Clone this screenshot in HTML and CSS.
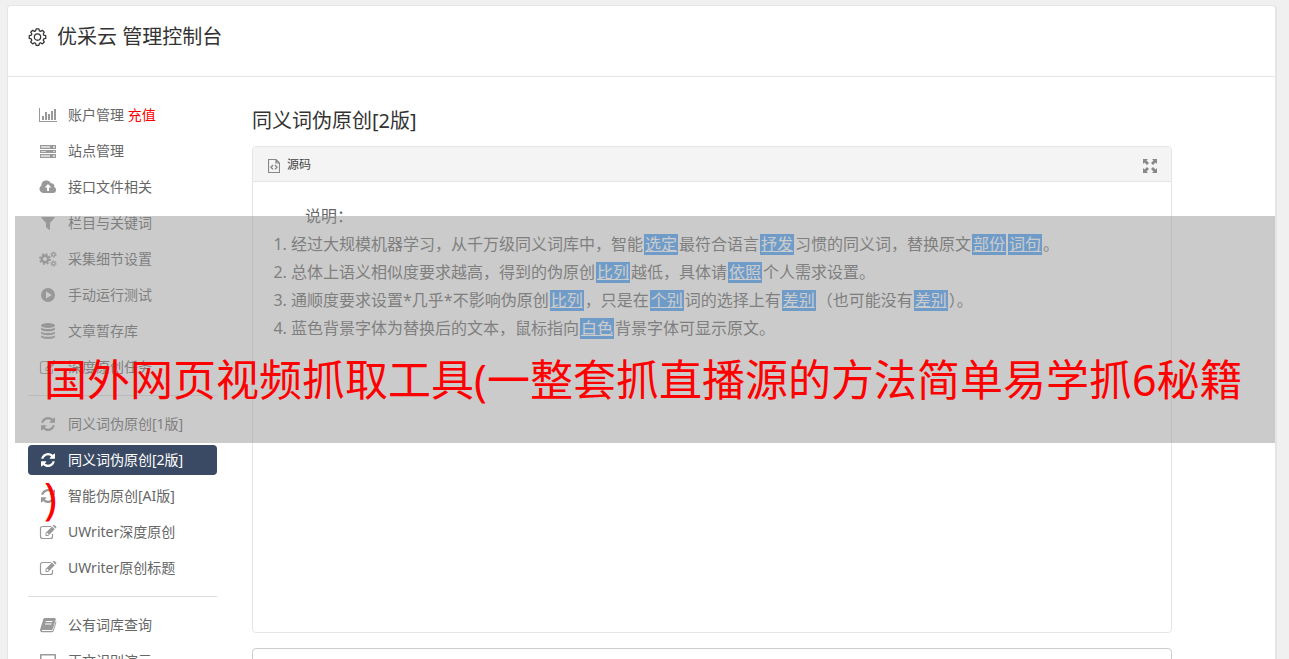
FILE: index.html
```html
<!DOCTYPE html>
<html lang="zh-CN">
<head>
    <meta charset="UTF-8">
    <meta name="viewport" content="width=device-width, initial-scale=1.0">
    <title>优采云 管理控制台</title>
    <link rel="stylesheet" href="styles.css">
</head>
<body>
    <!-- icon set -->
    <svg class="sprite" aria-hidden="true">
        <symbol id="i-chart" viewBox="0 0 18 16">
            <path d="M0 1h1v13h17v1H0zM3 9h2v4H3zM6 5h2v8H6zM9 7h2v6H9zM12 4h2v9h-2zM15 2h2v11h-2z"/>
        </symbol>
        <symbol id="i-server" viewBox="0 0 18 16">
            <path opacity=".4" d="M1 2h16v4H1zM1 7h16v3H1zM1 11h16v4H1z"/>
            <path fill-rule="evenodd" d="M1 2h16v4H1zM2 3v2h9V3zM14 3v2h2V3zM1 7h16v3H1zM2 8v1h5V8zM14 8v1h2V8zM1 11h16v4H1zM2 12v2h9v-2zM14 12v2h2v-2z"/>
        </symbol>
        <symbol id="i-cloud" viewBox="0 0 18 16">
            <path fill-rule="evenodd" d="M4 14a4 4 0 0 1-1.600-7.400A5 5 0 0 1 12 4.500a2.500 2.500 0 0 1 3 3.500A3.100 3.100 0 0 1 14.500 14zM8 12h2V8.500h2.300L9 5 5.700 8.500H8z"/>
        </symbol>
        <symbol id="i-filter" viewBox="0 0 18 16">
            <path d="M3 2h12c.7 0 .8.700.4 1.100L11 8v6.500c0 .5-.5.600-.8.300L7.300 12.600 7 12V8L2.600 3.100C2.200 2.700 2.300 2 3 2z"/>
        </symbol>
        <symbol id="i-cogs" viewBox="0 0 18 16">
            <g fill="none" stroke="currentColor">
                <circle cx="6" cy="8" r="3.200" stroke-width="2.400"/>
                <circle cx="6" cy="8" r="5" stroke-width="1.800" stroke-dasharray="2 1.927"/>
                <circle cx="14.500" cy="3.500" r="1.700" stroke-width="1.300"/>
                <circle cx="14.500" cy="3.500" r="2.700" stroke-dasharray="1.300 1.527"/>
                <circle cx="14.500" cy="12.500" r="1.700" stroke-width="1.300"/>
                <circle cx="14.500" cy="12.500" r="2.700" stroke-dasharray="1.300 1.527"/>
            </g>
        </symbol>
        <symbol id="i-play" viewBox="0 0 18 16">
            <path fill-rule="evenodd" d="M9 1a7 7 0 1 0 0 14A7 7 0 1 0 9 1zM7 4.500v7L12.800 8z"/>
        </symbol>
        <symbol id="i-database" viewBox="0 0 18 16">
            <ellipse cx="9" cy="2.500" rx="7" ry="2.500"/>
            <path d="M2 4.500c2 2 12 2 14 0v2c-1 2.600-13 2.600-14 0zM2 8.500c2 2 12 2 14 0v1.800c-1 2.600-13 2.600-14 0zM2 12.200c2 2 12 2 14 0V14c-1 2.600-13 2.600-14 0z"/>
        </symbol>
        <symbol id="i-edit" viewBox="0 0 18 16">
            <path d="M12 2.500H3.500a2 2 0 0 0-2 2v8a2 2 0 0 0 2 2h8a2 2 0 0 0 2-2V10" fill="none" stroke="currentColor" stroke-width="1.200"/>
            <path fill-rule="evenodd" d="M6.500 9 13 2.500l2.700 2.700L9.200 12H6.500zM7.500 9.300v1.600h1.600l.6-.6-1.600-1.600zM13.700 1.800l.7-.6c.4-.4 1-.4 1.400 0l1.300 1.300c.4.400.4 1 0 1.400l-.7.600z"/>
        </symbol>
        <symbol id="i-refresh" viewBox="0 0 1536 1536">
            <path d="M1511 928q0 5-1 7-64 268-268 434.500t-478 166.500q-146 0-282.500-55t-243.500-157l-129 129q-19 19-45 19t-45-19-19-45v-448q0-26 19-45t45-19h448q26 0 45 19t19 45-19 45l-137 137q71 66 161 102t187 36q134 0 250-65t186-179q11-17 53-117 8-23 30-23h192q13 0 22.500 9.500t9.500 22.500zm25-800v448q0 26-19 45t-45 19h-448q-26 0-45-19t-19-45 19-45l138-138q-148-137-349-137-134 0-250 65t-186 179q-11 17-53 117-8 23-30 23h-199q-13 0-22.500-9.500t-9.500-22.500v-7q65-268 270-434.500t480-166.500q146 0 284 55.500t245 156.500l130-129q19-19 45-19t45 19 19 45z"/>
        </symbol>
        <symbol id="i-book" viewBox="0 0 18 16">
            <path fill-rule="evenodd" d="M6 1h9.500c1 0 1.500.6 1.200 1.500L13.800 12c-.2.700-.8 1-1.500 1H4c-1 0-1.300.500-.8 1h9.600c.7 0 1.100-.3 1.300-1l2.700-9c.6.500.7 1 .5 1.600l-2.500 8.200c-.3.900-1 1.400-1.900 1.400H3.200C1.500 15.200.7 13.600 1.200 12.200L4 3c.4-1.200.9-2 2-2zM7 4l-.3 1h6.500l.3-1zM6.200 6.500l-.3 1h6.500l.3-1z"/>
        </symbol>
        <symbol id="i-laptop" viewBox="0 0 18 16">
            <path fill-rule="evenodd" d="M2 1h14a1 1 0 0 1 1 1v10H1V2a1 1 0 0 1 1-1zM2.500 2.500v8h13v-8zM0 13h18v1.500H0z"/>
        </symbol>
    </svg>

    <div class="console">
        <header class="console-header">
            <svg class="gear" viewBox="0 0 18 18" fill="none" stroke="currentColor" stroke-width="1.200" stroke-linejoin="round" aria-hidden="true">
                <path d="M7.200 2.700 7.700.8h2.600l.5 1.900 1.100.5 1.700-1L15.400 4l-1 1.700.5 1.100 1.900.5v2.600l-1.900.5-.5 1.100 1 1.700-1.800 1.800-1.700-1-1.100.5-.5 1.900H7.700l-.5-1.900-1.100-.5-1.700 1L2.600 13.200l1-1.700-.5-1.100-1.900-.5V7.300l1.900-.5.5-1.100-1-1.700 1.800-1.800 1.700 1z"/>
                <circle cx="9" cy="8.600" r="3"/>
            </svg>
            <h1>优采云 管理控制台</h1>
        </header>

        <div class="console-body">
            <nav class="sidebar">
                <ul>
                    <li><a href="#"><svg><use href="#i-chart"/></svg><span>账户管理 <b class="recharge">充值</b></span></a></li>
                    <li><a href="#"><svg><use href="#i-server"/></svg>站点管理</a></li>
                    <li><a href="#"><svg><use href="#i-cloud"/></svg>接口文件相关</a></li>
                    <li><a href="#"><svg><use href="#i-filter"/></svg>栏目与关键词</a></li>
                    <li><a href="#"><svg><use href="#i-cogs"/></svg>采集细节设置</a></li>
                    <li><a href="#"><svg><use href="#i-play"/></svg>手动运行测试</a></li>
                    <li><a href="#"><svg><use href="#i-database"/></svg>文章暂存库</a></li>
                    <li><a href="#"><svg><use href="#i-edit"/></svg>深度原创任务</a></li>
                </ul>
                <ul>
                    <li><a href="#"><svg class="small"><use href="#i-refresh"/></svg>同义词伪原创[1版]</a></li>
                    <li><a href="#" class="active"><svg class="small"><use href="#i-refresh"/></svg>同义词伪原创[2版]</a></li>
                    <li><a href="#"><svg class="small"><use href="#i-refresh"/></svg>智能伪原创[AI版]</a></li>
                    <li><a href="#"><svg><use href="#i-edit"/></svg>UWriter深度原创</a></li>
                    <li><a href="#"><svg><use href="#i-edit"/></svg>UWriter原创标题</a></li>
                </ul>
                <ul>
                    <li><a href="#"><svg><use href="#i-book"/></svg>公有词库查询</a></li>
                    <li><a href="#"><svg><use href="#i-laptop"/></svg>正文识别演示</a></li>
                </ul>
            </nav>

            <main class="content">
                <h2>同义词伪原创[2版]</h2>
                <section class="editor">
                    <div class="toolbar">
                        <button type="button" class="source">
                            <svg viewBox="0 0 12 14" fill="none" stroke="currentColor" aria-hidden="true">
                                <path d="M.5.500h7.500L11.500 4v9.500H.5zM8 .5V4h3.500" stroke-width="1.200"/>
                                <path d="M5 6 3 8.200 5 10.400M7 6l2 2.200-2 2.200" stroke-width="1.400"/>
                            </svg>
                            源码
                        </button>
                        <button type="button" class="maximize" aria-label="最大化">
                            <svg viewBox="0 0 14 14" aria-hidden="true">
                                <path d="M0 0h5L3.500 1.500 6 4 4 6 1.500 3.500 0 5zM14 0H9l1.500 1.500L8 4l2 2 2.500-2.500L14 5zM0 14h5l-1.500-1.500L6 10 4 8l-2.500 2.500L0 9zM14 14H9l1.500-1.500L8 10l2-2 2.500 2.500L14 9z"/>
                            </svg>
                        </button>
                    </div>
                    <div class="text">
                        <p>说明：</p>
                        <ol>
                            <li>经过大规模机器学习，从千万级同义词库中，智能<a href="#">选定</a>最符合语言<a href="#">抒发</a>习惯的同义词，替换原文<a href="#">部份</a><a href="#">词句</a>。</li>
                            <li>总体上语义相似度要求越高，得到的伪原创<a href="#">比列</a>越低，具体请<a href="#">依照</a>个人需求设置。</li>
                            <li>通顺度要求设置*几乎*不影响伪原创<a href="#">比列</a>，只是在<a href="#">个别</a>词的选择上有<a href="#">差别</a>（也可能没有<a href="#">差别</a>）。</li>
                            <li>蓝色背景字体为替换后的文本，鼠标指向<a href="#">白色</a>背景字体可显示原文。</li>
                        </ol>
                    </div>
                </section>
                <section class="result"></section>
            </main>
        </div>
    </div>

    <div class="banner">国外网页视频抓取工具(一整套抓直播源的方法简单易学抓6秘籍<br>)</div>
</body>
</html>
```
FILE: styles.css
```css
* {
    box-sizing: border-box;
}

body {
    margin: 0;
    padding: 5px 12px 0 7px;
    height: 100vh;
    overflow: hidden;
    background-color: #f0f0f0;
    color: #333;
    font-family: "Noto Sans", "Noto Sans CJK SC", sans-serif;
    font-size: 14px;
}

h1,
h2 {
    margin: 0;
    font-size: 20px;
    line-height: 28px;
    font-weight: 400;
}

ul,
ol,
p {
    margin: 0;
    padding: 0;
}

.sprite {
    position: absolute;
    width: 0;
    height: 0;
}

.console {
    background: #fff;
    border: 1px solid #e5e5e5;
    border-right-width: 2px;
    border-radius: 4px;
}

.console-header {
    display: flex;
    align-items: center;
    gap: 10px;
    height: 71px;
    padding: 0 20px 8px;
    border-bottom: 1px solid #e5e5e5;
}

.gear {
    width: 19px;
    height: 19px;
}

.console-body {
    display: flex;
    gap: 35px;
    padding: 23px 103px 20px 20px;
}

/* left menu */
.sidebar {
    flex: 0 0 189px;
}

.sidebar ul {
    list-style: none;
    display: flex;
    flex-direction: column;
    gap: 6px;
}

.sidebar ul + ul {
    margin-top: 13px;
    padding-top: 13px;
    border-top: 1px solid #ddd;
}

.sidebar a {
    display: flex;
    align-items: center;
    gap: 11px;
    height: 30px;
    padding: 0 10px 0 11px;
    border-radius: 4px;
    color: #666;
    line-height: 20px;
    text-decoration: none;
    white-space: nowrap;
}

.sidebar svg {
    width: 18px;
    height: 16px;
    fill: currentColor;
    color: #999;
}

.sidebar svg.small {
    height: 14px;
}

.sidebar a.active {
    background: #3b4a64;
    color: #fff;
}

.sidebar a.active svg {
    color: #fff;
}

.recharge {
    color: #f00;
    font-weight: 400;
}

/* editor */
.content {
    flex: 1;
    min-width: 0;
    padding-top: 7px;
}

.editor {
    min-height: 487px;
    margin: 11px 0 15px;
    border: 1px solid #e5e5e5;
    border-radius: 4px;
}

.toolbar {
    display: flex;
    align-items: center;
    justify-content: space-between;
    height: 35px;
    padding: 0 14px 0 15px;
    background: #f4f4f4;
    border-bottom: 1px solid #e5e5e5;
    border-radius: 4px 4px 0 0;
}

.toolbar button {
    display: flex;
    align-items: center;
    gap: 7px;
    padding: 0;
    border: 0;
    background: none;
    color: #444;
    font: inherit;
    font-size: 12px;
    cursor: pointer;
}

.toolbar svg {
    margin-top: 4px;
    color: #888;
}

.source svg {
    width: 12px;
    height: 14px;
}

.maximize svg {
    width: 14px;
    height: 14px;
    fill: #888;
}

.text {
    padding: 20px;
    color: #666;
    font-size: 16px;
    line-height: 28px;
}

.text p {
    text-indent: 2em;
}

.text ol {
    padding-left: 18px;
}

.text a {
    display: inline-block;
    margin: 0 1px;
    padding: 0 1px;
    background: #469ffb;
    color: #fff;
    line-height: 21px;
    text-decoration: underline;
}

.result {
    height: 200px;
    border: 1px solid #ccc;
    border-radius: 4px;
}

/* headline laid over the page */
.banner {
    position: absolute;
    top: 216px;
    left: 15px;
    right: 14px;
    height: 227px;
    padding: 105px 0 0 29px;
    background: rgba(151, 151, 151, 0.5);
    color: #f00;
    font-size: 43px;
    line-height: 118px;
    white-space: nowrap;
}
```
